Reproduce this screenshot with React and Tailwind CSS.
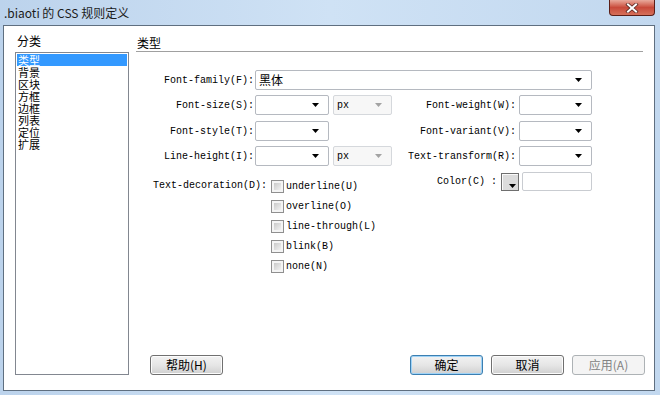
import React from 'react';

const mono = "font-['Liberation_Mono',monospace] text-[10px] text-black whitespace-nowrap";
const cjk = "font-['Noto_Sans_CJK_SC',sans-serif]";

const categories = ['类型', '背景', '区块', '方框', '边框', '列表', '定位', '扩展'];

function Arrow({ disabled }) {
  return (
    <svg width="7" height="4" viewBox="0 0 7 4" className="shrink-0">
      <path d="M0 0h7L3.5 4z" fill={disabled ? '#a3a3a3' : '#000'} />
    </svg>
  );
}

function Combo({ className, children, disabled }) {
  return (
    <div
      className={`h-[20px] shrink-0 rounded-[2px] border flex items-center justify-between pl-[3px] pr-[9px] ${
        disabled ? 'border-[#d5d8dc] bg-[#f7f7f7]' : 'border-[#b5b9c0] bg-white'
      } ${className}`}
    >
      <span className={disabled ? `${mono} text-[#9a9a9a]` : `${cjk} text-[12px] leading-none text-black`}>{children}</span>
      <Arrow disabled={disabled} />
    </div>
  );
}

function Check({ label }) {
  return (
    <div className="h-[20px] flex items-center gap-[2px]">
      <div className="w-[13px] h-[13px] border border-[#8f8f8f] bg-[#f4f4f4] p-[2px]">
        <div className="w-full h-full bg-linear-to-br from-[#c9c9c9] to-[#f1f1f1]" />
      </div>
      <span className={mono}>{label}</span>
    </div>
  );
}

function Button({ children, focused, disabled, className = '' }) {
  const border = focused
    ? 'border-[#3c7fb1] shadow-[inset_0_0_0_1px_#9fd3f7]'
    : disabled
    ? 'border-[#adb2b5]'
    : 'border-[#707070] shadow-[inset_0_0_0_1px_#fcfcfc]';
  const bg = disabled ? 'bg-[#f4f4f4] text-[#838383]' : 'bg-linear-to-b from-[#f2f2f2] via-[#e6e6e6] to-[#d0d0d0] text-black';
  return (
    <div className={`w-[73px] h-[20px] rounded-[3px] border flex items-center justify-center ${border} ${bg} ${className}`}>
      <span className={`${cjk} text-[12px] leading-none`}>{children}</span>
    </div>
  );
}

export default function App() {
  return (
    <div className="w-[660px] h-[395px] flex flex-col bg-linear-to-r from-[#bcd3ec] via-[#cfe2f5] to-[#c2d8ef] pb-[4px] overflow-hidden">
      {/* Title bar */}
      <div className="h-[25px] shrink-0 flex items-start justify-between">
        <span className={`${cjk} text-[12px] leading-none text-[#1b1b1b] ml-[4px] mt-[7px]`}>.biaoti 的 CSS 规则定义</span>
        <div className="mr-[5px] w-[46px] h-[16px] rounded-b-[4px] border border-t-0 border-[#5b1e17] bg-linear-to-b from-[#e8a99c] via-[#c8493a] to-[#d5705a] flex items-center justify-center">
          <svg width="14" height="10" viewBox="0 0 14 10">
            <path d="M3 1.5l8 7M11 1.5l-8 7" stroke="#5a2a24" strokeWidth="3.6" strokeLinecap="square" />
            <path d="M3 1.5l8 7M11 1.5l-8 7" stroke="#fff" strokeWidth="2" strokeLinecap="square" />
          </svg>
        </div>
      </div>

      {/* Client area */}
      <div className="flex-1 ml-[3px] mr-[5px] border border-[#5f6f80] bg-white flex">
        {/* Category list */}
        <div className="ml-[11px] pt-[8px] pb-[15px] w-[114px] flex flex-col shrink-0">
          <div className={`${cjk} h-[14px] text-[12px] leading-[14px] text-black pl-[2px] mb-[4px]`}>分类</div>
          <div className="flex-1 border border-[#828790] p-[1px]">
            {categories.map((c, i) => (
              <div
                key={c}
                className={`${cjk} h-[12px] text-[11px] leading-[12px] pl-[1px] ${
                  i === 0 ? 'bg-[#3399ff] text-white' : 'text-black'
                }`}
              >
                {c}
              </div>
            ))}
          </div>
        </div>

        {/* Right panel */}
        <div className="ml-[7px] mr-[11px] flex-1 flex flex-col pt-[10px] pb-[15px]">
          <div className={`${cjk} h-[16px] text-[12px] leading-[14px] text-black pl-[1px] border-b border-[#a0a0a0]`}>类型</div>

          <div className="flex items-center h-[20px] mt-[18px] w-[456px]">
            <div className={`${mono} w-[118px] text-right`}>Font-family(F):</div>
            <Combo className="ml-[1px] w-[337px]">黑体</Combo>
          </div>

          {[
            ['Font-size(S):', 'Font-weight(W):', true, 'mt-[5px]'],
            ['Font-style(T):', 'Font-variant(V):', false, 'mt-[6px]'],
            ['Line-height(I):', 'Text-transform(R):', true, 'mt-[5px]'],
          ].map(([left, right, unit, mt]) => (
            <div key={left} className={`flex items-center h-[20px] w-[456px] ${mt}`}>
              <div className={`${mono} w-[118px] text-right`}>{left}</div>
              <Combo className="ml-[1px] w-[74px]" />
              {unit ? <Combo className="ml-[4px] w-[59px]" disabled>px</Combo> : <div className="w-[63px] shrink-0" />}
              <div className={`${mono} flex-1 text-right mr-[3px]`}>{right}</div>
              <Combo className="w-[73px]" />
            </div>
          ))}

          <div className="flex items-start w-[456px] mt-[6px]">
            <div className="flex shrink-0">
              <div className={`${mono} w-[131px] text-right mt-[4px] h-[20px] leading-[20px]`}>Text-decoration(D):</div>
              <div className="ml-[4px] pt-[4px] flex flex-col">
                <Check label="underline(U)" />
                <Check label="overline(O)" />
                <Check label="line-through(L)" />
                <Check label="blink(B)" />
                <Check label="none(N)" />
              </div>
            </div>
            <div className="flex-1 flex items-center justify-end">
              <span className={mono}>Color(C) :</span>
              <div className="ml-[4px] w-[18px] h-[18px] border border-[#6f6f6f] bg-[#dcdcdc] shadow-[inset_1px_1px_0_#fafafa] flex items-end justify-end pr-[2px] pb-[2px]">
                <Arrow />
              </div>
              <div className="ml-[3px] w-[70px] h-[19px] border border-[#c9ccd1] rounded-[2px] bg-white" />
            </div>
          </div>

          <div className="flex-1" />

          <div className="flex items-center mr-[-2px]">
            <Button className="ml-[14px]">帮助(H)</Button>
            <div className="ml-auto flex gap-[8px]">
              <Button focused>确定</Button>
              <Button>取消</Button>
              <Button disabled>应用(A)</Button>
            </div>
          </div>
        </div>
      </div>
    </div>
  );
}
